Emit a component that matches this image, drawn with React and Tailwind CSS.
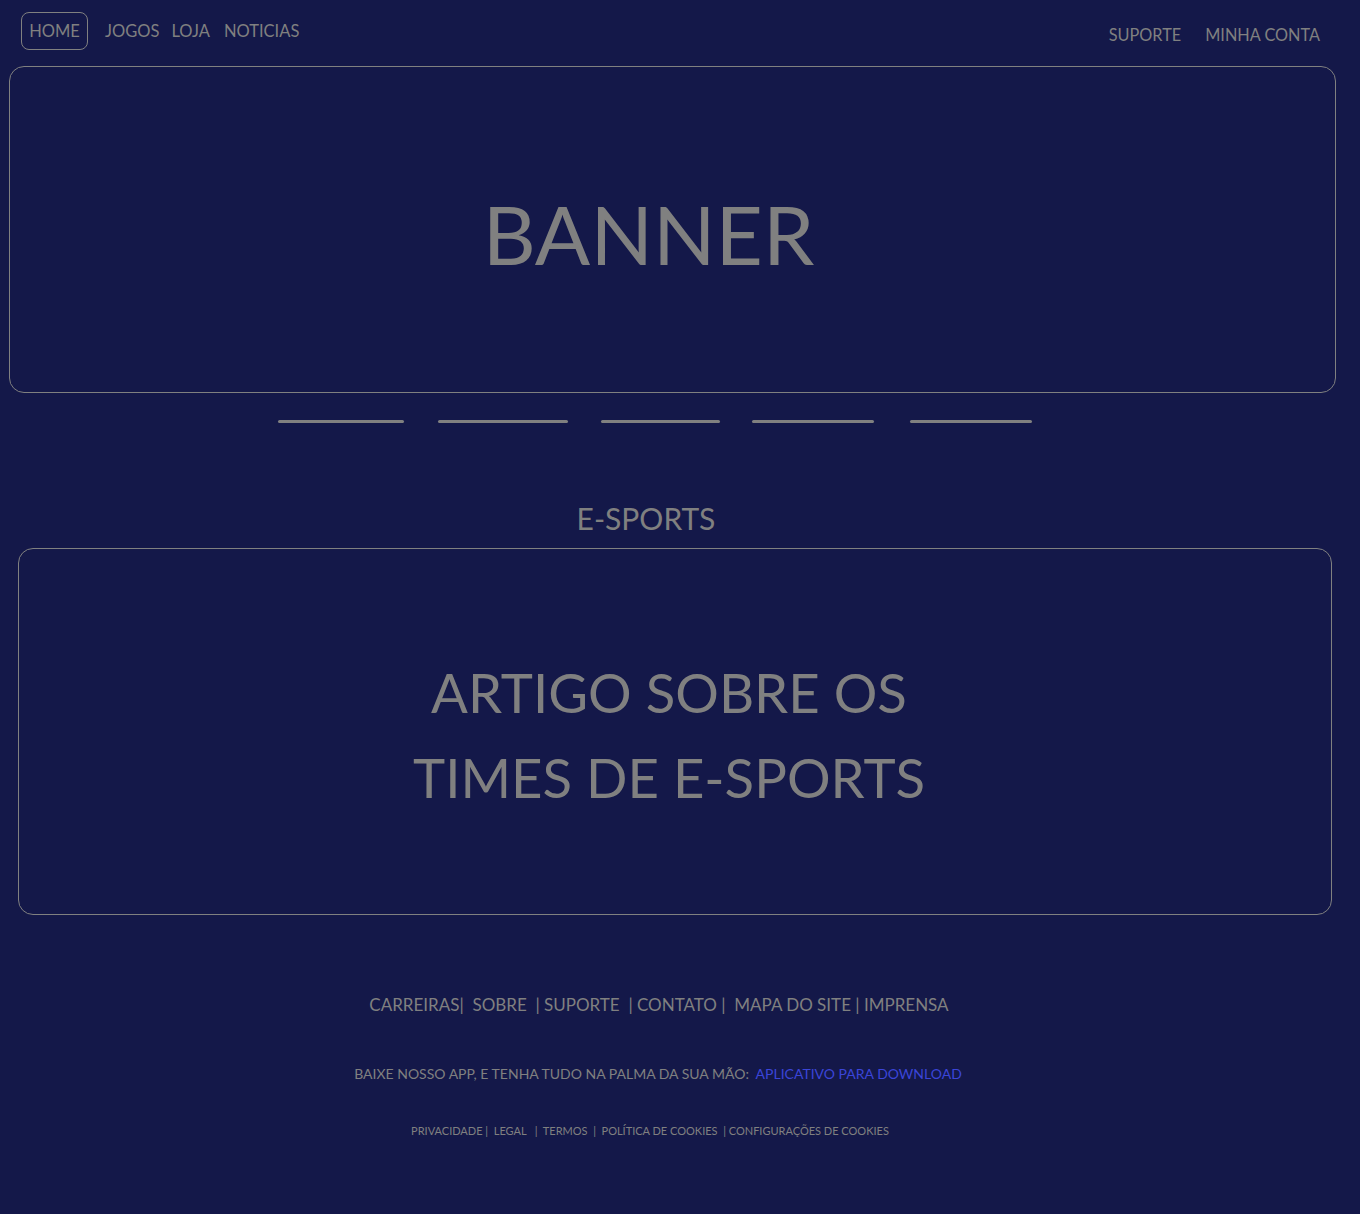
export default function App() {
  const font = { fontFamily: 'Lato, "Open Sans", sans-serif' };
  return (
    <div className="min-h-[1214px] w-[1360px] bg-[#141849] text-[#808080]" style={font}>
      <nav className="flex items-start justify-between pt-[12px] pl-[21px] pr-[40px] h-[66px]">
        <div className="flex items-center text-[16.5px]">
          <span className="flex h-[38px] w-[67px] items-center justify-center rounded-[8px] border border-[#808080] pt-[1px]">HOME</span>
          <span className="ml-[17px] pt-[1px]">JOGOS</span>
          <span className="ml-[12px] pt-[1px]">LOJA</span>
          <span className="ml-[14px] pt-[1px]">NOTICIAS</span>
        </div>
        <div className="flex items-center pt-[10px] text-[16.3px]">
          <span>SUPORTE</span>
          <span className="ml-[24px] pt-[1px]">MINHA CONTA</span>
        </div>
      </nav>
      <div className="ml-[9px] flex h-[327px] w-[1327px] items-center justify-center rounded-[15px] border border-[#808080] pr-[48px]">
        <span className="pt-[6px] text-[82px] leading-none">BANNER</span>
      </div>
      <div className="flex pl-[278px] pt-[27px]">
        <div className="h-[3px] w-[126px] rounded-full bg-[#808080]" />
        <div className="ml-[34px] h-[3px] w-[130px] rounded-full bg-[#808080]" />
        <div className="ml-[33px] h-[3px] w-[119px] rounded-full bg-[#808080]" />
        <div className="ml-[32px] h-[3px] w-[122px] rounded-full bg-[#808080]" />
        <div className="ml-[36px] h-[3px] w-[122px] rounded-full bg-[#808080]" />
      </div>
      <div className="flex justify-center pt-[77px]">
        <h2 className="mr-[68px] text-[30px] leading-[36px]">E-SPORTS</h2>
      </div>
      <div className="ml-[18px] mt-[12px] flex h-[367px] w-[1314px] flex-col items-center justify-center rounded-[15px] border border-[#808080] pr-[12px] pt-[6px] text-[54.5px] leading-[85px]">
        <span>ARTIGO SOBRE OS</span>
        <span>TIMES DE E-SPORTS</span>
      </div>
      <footer className="flex flex-col items-center pt-[78px]">
        <p className="mr-[42px] text-[17px] leading-[24px]">
          CARREIRAS|&nbsp; SOBRE &nbsp;| SUPORTE &nbsp;| CONTATO |&nbsp; MAPA DO SITE | IMPRENSA
        </p>
        <p className="mr-[44px] mt-[47px] text-[14px] leading-[20px]">
          BAIXE NOSSO APP, E TENHA TUDO NA PALMA DA SUA MÃO:&nbsp; <span className="text-[#3b45d8]">APLICATIVO PARA DOWNLOAD</span>
        </p>
        <p className="mr-[60px] mt-[39px] text-[11px] leading-[16px]">
          PRIVACIDADE |&nbsp; LEGAL &nbsp; |&nbsp; TERMOS &nbsp;|&nbsp; POLÍTICA DE COOKIES &nbsp;| CONFIGURAÇÕES DE COOKIES
        </p>
      </footer>
    </div>
  );
}
